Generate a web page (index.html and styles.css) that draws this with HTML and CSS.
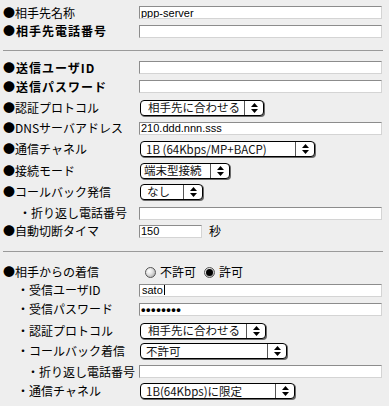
FILE: index.html
```html
<!DOCTYPE html>
<html lang="ja">
<head>
<meta charset="utf-8">
<title>接続先設定</title>
<link rel="stylesheet" href="styles.css">
</head>
<body>
<form class="form">
  <div class="lbl">●相手先名称</div>
  <div class="ctl"><input class="field" type="text" value="ppp-server"></div>

  <div class="lbl bold">●相手先電話番号</div>
  <div class="ctl"><input class="field" type="text" value=""></div>

  <div class="sep sep-a"></div>

  <div class="lbl bold">●送信ユーザID</div>
  <div class="ctl"><input class="field" type="text" value=""></div>

  <div class="lbl bold">●送信パスワード</div>
  <div class="ctl"><input class="field secret" type="password" value=""></div>

  <div class="lbl">●認証プロトコル</div>
  <div class="ctl">
    <span class="popup w-auth"><span class="popup-text">相手先に合わせる</span><span class="popup-arrow"><svg width="7" height="10" viewBox="0 0 7 10"><polygon points="0,4 3.5,0 7,4"/><polygon points="0,6 3.5,10 7,6"/></svg></span></span>
  </div>

  <div class="lbl">●DNSサーバアドレス</div>
  <div class="ctl"><input class="field" type="text" value="210.ddd.nnn.sss"></div>

  <div class="lbl">●通信チャネル</div>
  <div class="ctl">
    <span class="popup w-chan"><span class="popup-text">1B (64Kbps/MP+BACP)</span><span class="popup-arrow"><svg width="7" height="10" viewBox="0 0 7 10"><polygon points="0,4 3.5,0 7,4"/><polygon points="0,6 3.5,10 7,6"/></svg></span></span>
  </div>

  <div class="lbl">●接続モード</div>
  <div class="ctl">
    <span class="popup w-mode"><span class="popup-text">端末型接続</span><span class="popup-arrow"><svg width="7" height="10" viewBox="0 0 7 10"><polygon points="0,4 3.5,0 7,4"/><polygon points="0,6 3.5,10 7,6"/></svg></span></span>
  </div>

  <div class="lbl">●コールバック発信</div>
  <div class="ctl">
    <span class="popup w-none"><span class="popup-text">なし</span><span class="popup-arrow"><svg width="7" height="10" viewBox="0 0 7 10"><polygon points="0,4 3.5,0 7,4"/><polygon points="0,6 3.5,10 7,6"/></svg></span></span>
  </div>

  <div class="lbl sub1">・折り返し電話番号</div>
  <div class="ctl"><input class="field" type="text" value=""></div>

  <div class="lbl">●自動切断タイマ</div>
  <div class="ctl timer"><input class="field short" type="text" value="150"><span class="unit">秒</span></div>

  <div class="sep sep-b"></div>

  <div class="lbl">●相手からの着信</div>
  <div class="ctl radios">
    <label class="radio"><span class="dot"></span>不許可</label>
    <label class="radio"><span class="dot on"></span>許可</label>
  </div>

  <div class="lbl sub2">・受信ユーザID</div>
  <div class="ctl"><span class="field typed">sato<span class="caret"></span></span></div>

  <div class="lbl sub2">・受信パスワード</div>
  <div class="ctl"><input class="field secret" type="password" value="12345678"></div>

  <div class="lbl sub2">・認証プロトコル</div>
  <div class="ctl">
    <span class="popup w-auth2"><span class="popup-text">相手先に合わせる</span><span class="popup-arrow"><svg width="7" height="10" viewBox="0 0 7 10"><polygon points="0,4 3.5,0 7,4"/><polygon points="0,6 3.5,10 7,6"/></svg></span></span>
  </div>

  <div class="lbl sub2">・コールバック着信</div>
  <div class="ctl">
    <span class="popup w-cb"><span class="popup-text">不許可</span><span class="popup-arrow"><svg width="7" height="10" viewBox="0 0 7 10"><polygon points="0,4 3.5,0 7,4"/><polygon points="0,6 3.5,10 7,6"/></svg></span></span>
  </div>

  <div class="lbl sub3">・折り返し電話番号</div>
  <div class="ctl"><input class="field" type="text" value=""></div>

  <div class="lbl sub2">・通信チャネル</div>
  <div class="ctl">
    <span class="popup w-chan2"><span class="popup-text">1B(64Kbps)に限定</span><span class="popup-arrow"><svg width="7" height="10" viewBox="0 0 7 10"><polygon points="0,4 3.5,0 7,4"/><polygon points="0,6 3.5,10 7,6"/></svg></span></span>
  </div>
</form>
</body>
</html>
```

FILE: styles.css
```css
html, body {
  margin: 0;
  padding: 0;
  background: #eeeeee;
}

body {
  font-family: "Noto Sans CJK JP", "Noto Sans", sans-serif;
  font-size: 12px;
  color: #000;
}

.form {
  display: grid;
  grid-template-columns: 139px 250px;
  grid-template-rows: 19px 18px 18px 19px 19px 23px 18px 24px 19px 23px 20px 16px 23px 20px 16px 22px 21px 20px 21px 18px;
  padding-top: 3px;
  margin: 0;
}

.lbl {
  display: flex;
  align-items: center;
  padding-left: 3px;
  line-height: 1;
  white-space: nowrap;
}

.lbl.bold {
  font-weight: bold;
  letter-spacing: 1px;
}

.lbl.sub1 { padding-left: 19px; }
.lbl.sub2 { padding-left: 17px; }
.lbl.sub3 { padding-left: 27px; }

.ctl {
  display: flex;
  align-items: center;
}

.sep {
  grid-column: 1 / -1;
  margin-left: 3px;
  width: 380px;
  height: 0;
  border-top: 1px solid #9a9a9a;
}

.sep-a { margin-top: 10px; }
.sep-b { margin-top: 12px; }

.field {
  box-sizing: border-box;
  width: 243px;
  height: 13px;
  margin: 0;
  padding: 0 1px;
  border: 1px solid;
  border-color: #8c8c8c #d4d4d4 #d4d4d4 #8c8c8c;
  background: #ffffff;
  font-family: "Liberation Sans", Arial, sans-serif;
  font-size: 11px;
  line-height: 11px;
  color: #000;
  outline: none;
}

.field.typed {
  display: flex;
  align-items: center;
  padding-left: 2px;
}

.caret {
  display: inline-block;
  width: 1px;
  height: 10px;
  margin-left: 1px;
  background: #000;
}

.field.secret {
  font-size: 13px;
  letter-spacing: 0.5px;
  font-weight: bold;
}

.field.short {
  width: 63px;
}

.timer .unit {
  margin-left: 7px;
  line-height: 1;
}

.popup {
  box-sizing: border-box;
  display: inline-flex;
  align-items: stretch;
  height: 16px;
  margin-left: 1px;
  border: 1px solid #000;
  border-radius: 4px;
  background: #ffffff;
  box-shadow: 1px 1px 0 #6a6a6a;
}

.popup-text {
  flex: 1;
  display: flex;
  align-items: center;
  padding-left: 5px;
  font-size: 11.5px;
  line-height: 13px;
  color: #111;
  white-space: nowrap;
}

.popup-arrow {
  width: 18px;
  display: flex;
  align-items: center;
  justify-content: center;
  border-left: 1px solid #555;
}

.popup-arrow svg {
  fill: #000;
  display: block;
}

.w-auth { width: 124px; }
.w-auth2 { width: 126px; }
.w-auth .popup-text, .w-auth2 .popup-text { padding-left: 7px; }
.w-chan { width: 175px; }
.w-mode { width: 90px; }
.w-mode .popup-text { padding-left: 3px; }
.w-none { width: 63px; }
.w-none .popup-text { padding-left: 6px; }
.w-cb { width: 147px; }
.w-chan2 { width: 155px; }

.radios {
  gap: 8px;
  padding-left: 6px;
}

.radio {
  display: inline-flex;
  align-items: center;
  gap: 4px;
  line-height: 1;
}

.dot {
  box-sizing: border-box;
  position: relative;
  width: 11px;
  height: 11px;
  border-radius: 50%;
  border: 1px solid #555;
  background: radial-gradient(circle at 35% 35%, #ffffff 0%, #e2e2e2 40%, #9a9a9a 100%);
}

.dot.on::after {
  content: "";
  position: absolute;
  left: 1px;
  top: 1px;
  width: 7px;
  height: 7px;
  border-radius: 50%;
  background: #000;
}
```
